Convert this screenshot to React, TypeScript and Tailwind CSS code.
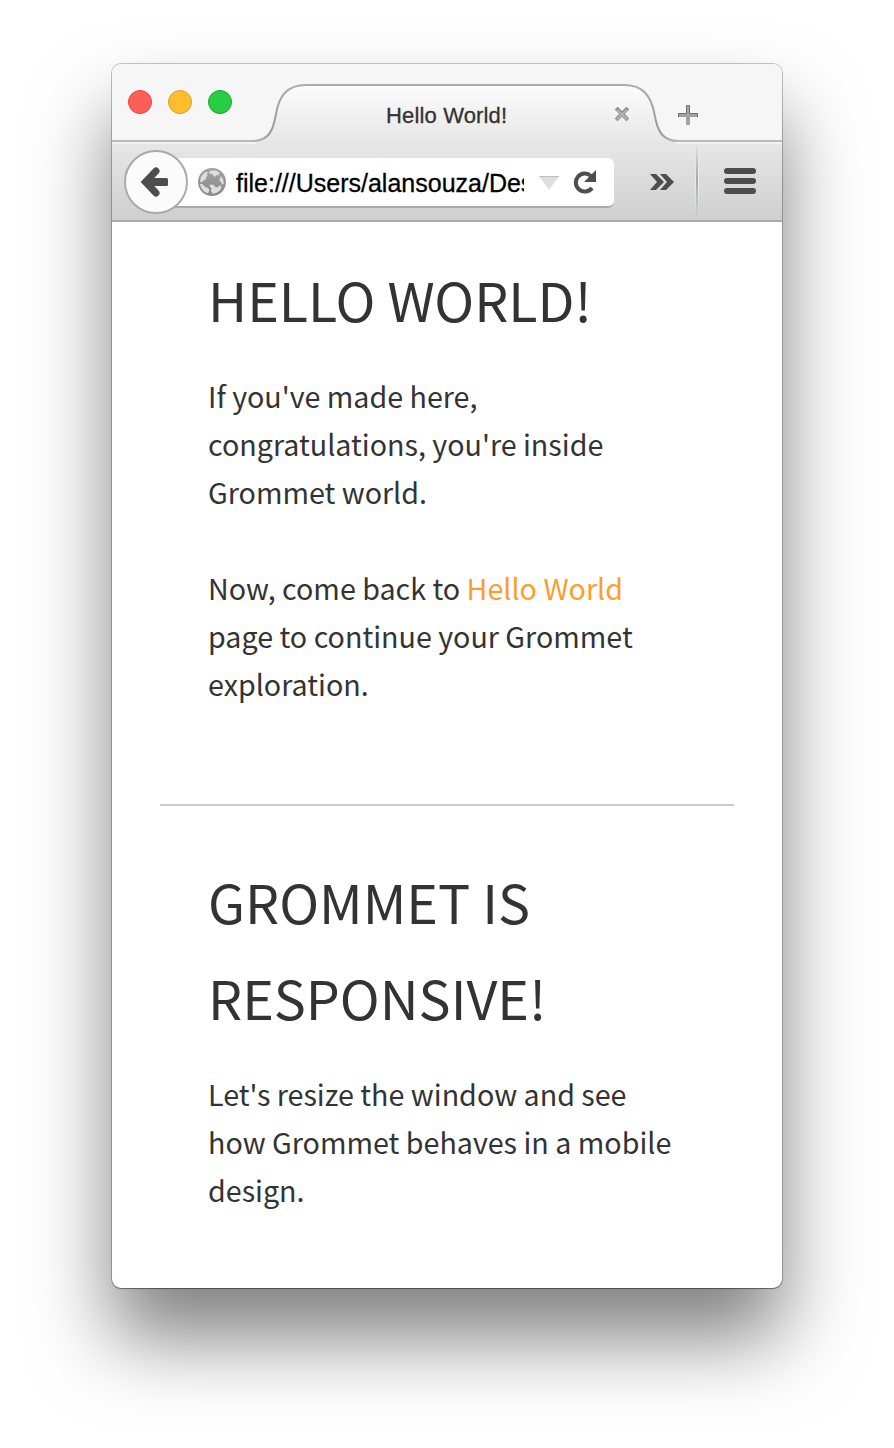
const sans = "font-['Liberation_Sans',Arial,sans-serif]";
const body = "font-['Noto_Sans_CJK_SC','Noto_Sans',sans-serif]";

function TabShape() {
  return (
    <svg className="col-start-1 row-start-1 block" width="434" height="58" viewBox="0 0 434 58">
      <defs>
        <linearGradient id="tab" x1="0" y1="0" x2="0" y2="1">
          <stop offset="0" stopColor="#fcfcfc" />
          <stop offset="1" stopColor="#e7e7e7" />
        </linearGradient>
        <linearGradient id="edge" gradientUnits="userSpaceOnUse" x1="0" y1="0" x2="0" y2="58">
          <stop offset="0" stopColor="#acacac" />
          <stop offset="0.85" stopColor="#999" />
          <stop offset="1" stopColor="#b4b4b4" />
        </linearGradient>
      </defs>
      <path d="M4 58V57C20 57 25 48 28 30C31 12 39 1 58 1H376C395 1 403 12 406.5 30C409.5 48 415 57 430 57V58Z" fill="url(#tab)" />
      <path d="M4 57C20 57 25 48 28 30C31 12 39 1 58 1H376C395 1 403 12 406.5 30C409.5 48 415 57 430 57" fill="none" stroke="url(#edge)" strokeWidth="2" />
    </svg>
  );
}

function TitleBar() {
  return (
    <div className="flex h-[78px] items-end rounded-t-[9px] bg-[linear-gradient(to_bottom,#f6f6f6_76px,#bababa_76px)]">
      <div className="flex w-[136px] shrink-0 gap-4 self-start pt-[26px] pl-4">
        <span className="size-6 rounded-full border border-[#e2443e] bg-[#ff5f57]" />
        <span className="size-6 rounded-full border border-[#dfa023] bg-[#ffbd2e]" />
        <span className="size-6 rounded-full border border-[#12ac28] bg-[#28cd41]" />
      </div>
      <div className="grid w-[434px] shrink-0">
        <TabShape />
        <div className={`${sans} col-start-1 row-start-1 flex items-start pt-[19px] pl-[138px] text-[22px] leading-[26px] text-[#333]`}>
          <span className="w-[228px] tracking-[0.15px] [-webkit-text-stroke:0.3px_#333]">Hello World!</span>
          <svg className="mt-[3px]" width="16" height="16" viewBox="0 0 16 16">
            <path d="M2.2 2.2L13.8 13.8M13.8 2.2L2.2 13.8" stroke="#8a8a8a" strokeWidth="4" />
            <path d="M2.8 3.6L13.2 13.4M13.2 3.6L2.8 13.4" stroke="#b0b0b0" strokeWidth="2.2" />
          </svg>
        </div>
      </div>
      <svg className="mb-[17px] -ml-1" width="20" height="20" viewBox="0 0 20 20">
        <path d="M8 0H12V8H20V12H12V20H8V12H0V8H8Z" fill="#a3a3a3" />
        <path d="M8.5 8V.5H11.5V8M.5 12V8.5H8.5M11.5 8.5H19.5V12" fill="none" stroke="#707070" />
      </svg>
    </div>
  );
}

function Globe() {
  return (
    <svg width="28" height="28" viewBox="0 0 28 28">
      <defs>
        <linearGradient id="land" x1="0" y1="0" x2="0" y2="1">
          <stop offset="0" stopColor="#a2a2a2" />
          <stop offset="1" stopColor="#898989" />
        </linearGradient>
      </defs>
      <circle cx="14" cy="14" r="14" fill="url(#land)" />
      <path d="M3 9L6 5L9 3.5L10 5L8.5 6.5L10 8L7.5 9L8.5 11L6 12L4 14L2 14Z" fill="#dedede" />
      <path d="M13 2.5L18 2.5L22 5L20 6L21.5 8L18.5 7L17 9L15 7L13.5 5.5L11.5 6L11 4Z" fill="#dedede" />
      <path d="M22.5 8L25 11L26 15L24.5 17L23 14L21 12L22 11Z" fill="#dedede" />
      <path d="M2 16L4.5 16L6.5 18.5L10 20L11.5 22L10 25.5L6 23.5L3 19.5Z" fill="#dedede" />
      <path d="M11 17L15 16.5L17.5 19L20 19.5L21.5 17L23.5 19L22 22.5L18 25L14.5 25.8L13 23L13.5 20.5Z" fill="#dedede" />
    </svg>
  );
}

function Toolbar() {
  return (
    <div className="flex h-20 items-start border-b-2 border-[#ababab] bg-[linear-gradient(#f2f2f2,#f2f2f2),linear-gradient(#f2f2f2,#f2f2f2),linear-gradient(to_bottom,#e7e7e7,#cfcfcf)] bg-[length:144px_2px,106px_2px,100%_100%] bg-[position:left_top,right_top,left_top] bg-no-repeat">
      <div className="z-10 mt-2 ml-3 flex size-16 shrink-0 items-center justify-center rounded-full border-2 border-[#aaa] bg-[#fbfbfb]">
        <svg width="32" height="32" viewBox="0 0 32 32">
          <path d="M16 5L5.5 16L16 27" fill="none" stroke="#4d4d4d" strokeWidth="7" strokeLinecap="round" />
          <rect x="6" y="12" width="22" height="8" rx="1.5" fill="#4d4d4d" />
        </svg>
      </div>
      <div className="mt-4 -ml-5 flex h-[50px] w-[446px] shrink-0 items-center rounded-[6px] border-b-2 border-[#aaa] bg-white pl-[30px]">
        <Globe />
        <div className={`${sans} ml-[10px] w-[288px] overflow-hidden pt-px text-[25px] leading-[30px] whitespace-nowrap text-black [-webkit-text-stroke:0.3px_black]`}>
          file:///Users/alansouza/Des
        </div>
        <svg className="mt-[2px] ml-[15px]" width="20" height="14" viewBox="0 0 20 14">
          <path d="M0 0H20L10 14Z" fill="#dedede" />
          <path d="M0 .5H20" stroke="#bdbdbd" />
        </svg>
        <svg className="ml-[14px]" width="25" height="24" viewBox="0 0 25 24">
          <path d="M17.8 5.8A9 9 0 1 0 19 18" fill="none" stroke="#4d4d4d" strokeWidth="4" />
          <path d="M23 0V12H11Z" fill="#4d4d4d" />
        </svg>
      </div>
      <svg className="mt-8 ml-9 shrink-0" width="24" height="16" viewBox="0 0 24 16">
        <path d="M0 0H6L14 8L6 16H0L7 8ZM10 0H16L24 8L16 16H10L17 8Z" fill="#4d4d4d" />
      </svg>
      <div className="ml-[21px] h-[76px] w-[4px] bg-[linear-gradient(to_right,#e8e8e8_1px,#9faab5_1px,#9faab5_3px,#eee_3px)] [mask-image:linear-gradient(transparent,black_50%,transparent)]" />
      <div className="mt-[26px] ml-[25px] flex flex-col gap-1">
        <span className="h-[6px] w-8 rounded-[3px] bg-[#4d4d4d]" />
        <span className="h-[6px] w-8 rounded-[3px] bg-[#4d4d4d]" />
        <span className="h-[6px] w-8 rounded-[3px] bg-[#4d4d4d]" />
      </div>
    </div>
  );
}

function Page() {
  return (
    <main className={`${body} px-12 text-[28.67px] leading-[48px] text-[#333]`}>
      <section className="h-[584px] border-b-2 border-[#ccc] px-12 pt-[29px]">
        <h1 className="text-[53.75px] leading-[96px] whitespace-nowrap">HELLO WORLD!</h1>
        <p className="mt-[25px] whitespace-nowrap">
          If you've made here,<br />congratulations, you're inside<br />Grommet world.
        </p>
        <p className="mt-12 whitespace-nowrap">
          Now, come back to <a className="text-[#ff9d2a]">Hello World</a><br />page to continue your Grommet<br />exploration.
        </p>
      </section>
      <section className="px-12 pt-[47px]">
        <h1 className="text-[53.75px] leading-[96px] whitespace-nowrap">GROMMET IS<br />RESPONSIVE!</h1>
        <p className="mt-[25px] whitespace-nowrap">
          Let's resize the window and see<br />how Grommet behaves in a mobile<br />design.
        </p>
      </section>
    </main>
  );
}

export default function App() {
  return (
    <div className="h-[1448px] w-[894px] overflow-hidden bg-white px-28 pt-16">
      <div className="h-[1224px] w-[670px] rounded-[9px] bg-white shadow-[0_0_0_1px_rgba(0,0,0,0.22),0_1px_1px_rgba(0,0,0,0.3),0_50px_80px_rgba(0,0,0,0.5)]">
        <TitleBar />
        <Toolbar />
        <Page />
      </div>
    </div>
  );
}
